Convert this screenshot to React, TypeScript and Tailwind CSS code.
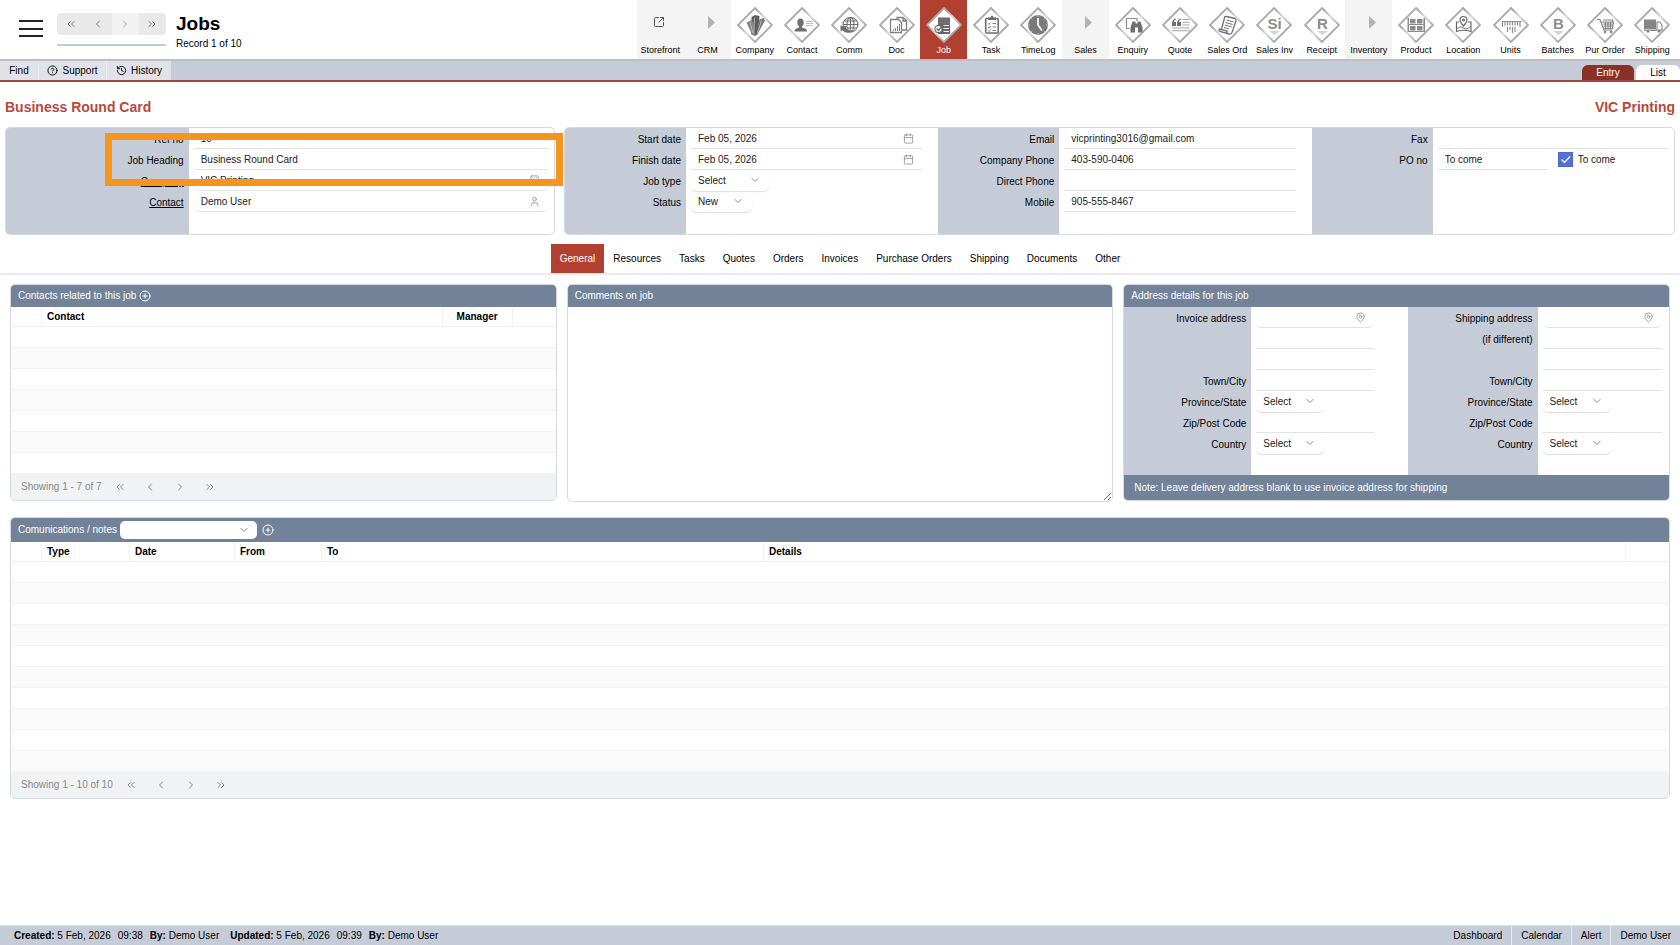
import { useState } from "react";
import type { ReactNode } from "react";
import { LuCalendar, LuChevronDown, LuChevronLeft, LuChevronRight, LuChevronsLeft, LuChevronsRight, LuCircleHelp, LuCirclePlus, LuHistory, LuMapPin, LuSquareArrowOutUpRight, LuUser, LuBuilding } from "react-icons/lu";

const G = "#6f6f6f";

// glyphs sit inside a 36x36 diamond
const glyphs: Record<string, ReactNode> = {
    Company: (
        <g fill="#5f5f5f">
            <path d="M14.500 10l3.500-2 4.500 1-1.500 18-3.500 2-3.500-2z" />
            <path d="M9.500 15.500l4-2 3 1.500.5 12.500-2.500-1z" fill="#858585" />
            <path d="M22.500 12.500l4-1.500 1.500 2.500-7 13-1.500 1z" fill="#777" />
            <path d="M17.500 10.500L16.800 28M13 15l2.800 11M24.500 13.500L20.500 26" stroke="#d0d0d0" strokeWidth=".7" fill="none" />
        </g>
    ),
    Contact: (
        <g fill={G}>
            <ellipse cx="16.500" cy="15.500" rx="3.200" ry="3.900" />
            <path d="M15 18h3v2.500l4 1.500q1 .5 1 2.500H10.500q0-2 1-2.500l3.500-1.500z" />
            <path d="M22 14.500h7M22 16.500h7M22 18.500h7" stroke="#b0b0b0" strokeWidth=".8" />
        </g>
    ),
    Comm: (
        <g fill="none" stroke={G} strokeWidth="1.100">
            <ellipse cx="19.500" cy="17.500" rx="7.500" ry="7" />
            <ellipse cx="19.500" cy="17.500" rx="3.500" ry="7" />
            <path d="M12 17.500h15M13.500 14h12M13.500 21h12M19.500 10.500v14" />
            <path d="M9 18.500l8 .5-2 2q4 3.500 12 1-5 5-11 4-3-.5-4.500-2.500l-2 1.500z" fill={G} stroke="#fff" strokeWidth=".5" />
        </g>
    ),
    Doc: (
        <g fill="none" stroke="#808080" strokeWidth="1.300">
            <path d="M11.500 12.500h8l3 3v10h-11z" />
            <path d="M18 12v-1.500h6l3.500 3V23H23M24 10.500v3.500h3.500" />
            <path d="M14.500 24v-1.500M16.500 24v-3M18.500 24v-5M20.500 24v-7" strokeWidth="1" />
        </g>
    ),
    Job: (
        <g>
            <path d="M12 10.500h12v16.500H12z" fill="#686868" />
            <path d="M12 13h12M12 15.500h12" stroke="#858585" strokeWidth=".6" />
            <path d="M17.500 18.500h5.500M17.500 21.500h5.500M17.500 24.500h5.500" stroke="#f0f0f0" strokeWidth="1.200" />
            <circle cx="12.500" cy="22" r="3.600" fill="#fff" stroke="#686868" strokeWidth="1.100" />
            <path d="M10.500 21.500l2 2 4-5" fill="none" stroke="#686868" strokeWidth="1.300" />
        </g>
    ),
    Task: (
        <g fill="none" stroke={G}>
            <rect x="12.700" y="11.500" width="12.500" height="14.500" rx="1" strokeWidth="1.600" />
            <path d="M15 13v-2.500h2.500Q18 8.500 19 8.500t1.500 2H23V13z" fill={G} stroke="none" />
            <path d="M15 16.500l1 1 1.500-2M15 20l1 1 1.500-2M15 23.500l1 1 1.500-2M19.500 16.500h3.500M19.500 20h3.500M19.500 23.500h3.500" strokeWidth=".9" />
        </g>
    ),
    TimeLog: (
        <g>
            <circle cx="18" cy="18" r="10" fill="#7a7a7a" />
            <path d="M18 11v7l4 5.500" fill="none" stroke="#fff" strokeWidth="1.700" />
            <path d="M18 8.500v1.500M18 26v1.500M8.500 18H10M26 18h1.500M11.300 11.300l1 1M24.700 11.300l-1 1M11.300 24.700l1-1M24.700 24.700l-1-1" stroke="#ddd" strokeWidth=".8" />
        </g>
    ),
    Enquiry: (
        <g fill={G}>
            <path d="M14.500 21.500h-3V11.500h10.500v2.500" fill="none" stroke="#909090" strokeWidth="1.200" />
            <path d="M17.500 14.500h3v2h2v-2h3l2 6v5h-4.500v-5h-3v5h-4.500v-5z" />
        </g>
    ),
    Quote: (
        <g>
            <path d="M14 11.500q-4 1-4 5v2.500h4v-4h-2q0-2 2-2.500zM19 11.500q-4 1-4 5v2.500h4v-4h-2q0-2 2-2.500z" fill={G} />
            <path d="M20.500 12.500h7M20.500 15.200h7M20.500 18h7M10 21h17.500M10 23.700h17.500" stroke="#a5a5a5" strokeWidth="1.100" />
        </g>
    ),
    "Sales Ord": (
        <g fill="none" stroke={G} strokeWidth="1.300">
            <path d="M15.500 11q0-2 2-1.500l8.500 2q1.500.5 1 2.500l-4 11.500q-1 2-3 1.500l-9-2.500q-1.500-.5-.5-2.500l7.500 2q-.5 2.500 1.500 3" />
            <path d="M15.500 11l-3 11" />
            <path d="M17.500 13l7 2M16.500 15.500l7 2M15.800 18l7 2M15 20.500l5 1.500" strokeWidth="1" />
        </g>
    ),
    "Sales Inv": <Letter text="Si" />,
    Receipt: <Letter text="R" />,
    Batches: <Letter text="B" />,
    Product: (
        <g fill="#8a8a8a">
            <path d="M9.500 11h1.500v14H9.500zM25.500 11H27v14h-1.500zM11 17h15v1H11zM11 24h15v1H11z" />
            <path d="M12 12h5.500v4.500H12zM19 12h5.500v4.500H19zM12 19h5.500v4.500H12zM19 19h5.500v4.500H19z" />
        </g>
    ),
    Location: (
        <g fill="none" stroke="#686868" strokeWidth="1.200">
            <path d="M14 15h-2.500v9.500q6.500-2.500 14.500 0V15h-3" />
            <path d="M12 21.500q3.500-3 6.500-.5t7-1.500" strokeWidth=".9" />
            <path d="M18.500 19q-3.500-4-3.500-6a3.500 3.500 0 0 1 7 0q0 2-3.500 6z" />
            <circle cx="18.500" cy="13" r="1" />
        </g>
    ),
    Units: (
        <path d="M9 14.500h19.500M9.500 15v5M12 15v3.500M14.500 15v3.500M17 15v3.500M19.500 15v3.500M22 15v3.500M24.500 15v3.500M27 15v5M14.500 20v5M17 20v3M19.500 20v6M22 20v5" fill="none" stroke="#919191" strokeWidth="1.200" />
    ),
    "Pur Order": (
        <g fill="none" stroke="#868686" strokeWidth="1.200">
            <path d="M10 12.500h3l4 10.500h8.500M14.500 15h12l-1 6.500h-8.500M16 17h10M16.500 19h9.500M18.500 15v6M21 15v6M23.500 15v6" />
            <path d="M16 13h9.500v2" />
            <circle cx="18" cy="25" r=".8" />
            <circle cx="24" cy="25" r=".8" />
        </g>
    ),
    Shipping: (
        <g fill="#858585">
            <path d="M10 12.500h12v9.500H10z" />
            <path d="M23 15h3l2 3.500V23h-5z" fill="#fff" stroke="#858585" strokeWidth="1.100" />
            <path d="M10 22.500h18v1.500H10z" />
            <circle cx="14" cy="24" r="2" stroke="#fff" strokeWidth=".6" />
            <circle cx="25" cy="24" r="2" stroke="#fff" strokeWidth=".6" />
        </g>
    ),
};

const modules = [
    "Storefront", "CRM", "Company", "Contact", "Comm", "Doc", "Job", "Task", "TimeLog", "Sales", "Enquiry",
    "Quote", "Sales Ord", "Sales Inv", "Receipt", "Inventory", "Product", "Location", "Units", "Batches", "Pur Order", "Shipping",
];

const tabs = ["General", "Resources", "Tasks", "Quotes", "Orders", "Invoices", "Purchase Orders", "Shipping", "Documents", "Other"];

type FieldDef = {
    id: string;
    label: string;
    value?: string;
    kind?: "text" | "lookup" | "select" | "po";
    icon?: ReactNode;
    link?: boolean;
    width?: string;
};

const jobFields: FieldDef[] = [
    { id: "ref", label: "Ref no", value: "10" },
    { id: "heading", label: "Job Heading", value: "Business Round Card" },
    { id: "company", label: "Company", value: "VIC Printing", kind: "lookup", link: true, icon: <LuBuilding /> },
    { id: "contact", label: "Contact", value: "Demo User", kind: "lookup", link: true, icon: <LuUser /> },
];

const dateFields: FieldDef[] = [
    { id: "start", label: "Start date", value: "Feb 05, 2026", icon: <LuCalendar /> },
    { id: "finish", label: "Finish date", value: "Feb 05, 2026", icon: <LuCalendar /> },
    { id: "type", label: "Job type", value: "Select", kind: "select", width: "w-[78px]" },
    { id: "status", label: "Status", value: "New", kind: "select", width: "w-[61px]" },
];

const contactFields: FieldDef[] = [
    { id: "email", label: "Email", value: "vicprinting3016@gmail.com" },
    { id: "phone", label: "Company Phone", value: "403-590-0406" },
    { id: "direct", label: "Direct Phone" },
    { id: "mobile", label: "Mobile", value: "905-555-8467" },
];

const poFields: FieldDef[] = [
    { id: "fax", label: "Fax" },
    { id: "po", label: "PO no", value: "To come", kind: "po" },
];

function addressFields(prefix: string, title: string, second: string): FieldDef[] {
    return [
        { id: prefix + "1", label: title, kind: "lookup", icon: <LuMapPin /> },
        { id: prefix + "2", label: second },
        { id: prefix + "3", label: "" },
        { id: prefix + "-town", label: "Town/City" },
        { id: prefix + "-state", label: "Province/State", value: "Select", kind: "select", width: "w-[68px]" },
        { id: prefix + "-zip", label: "Zip/Post Code" },
        { id: prefix + "-country", label: "Country", value: "Select", kind: "select", width: "w-[68px]" },
    ];
}

function Letter({ text }: { text: string }) {
    return (
        <g>
            <text x="18.500" y="22" textAnchor="middle" fontSize="15" fontWeight="bold" fill="#8c8c8c">{text}</text>
            <path d="M13 24h11l-5.500 4z" fill="#d4d4d4" />
        </g>
    );
}

function Diamond({ name }: { name: string }) {
    return (
        <svg viewBox="0 0 36 36" className="size-9" aria-hidden="true">
            <defs>
                <linearGradient id="edge" x1="0" y1="0" x2="1" y2="1">
                    <stop offset="0" stopColor="#d2d2d2" />
                    <stop offset=".3" stopColor="#a2a2a2" />
                    <stop offset=".5" stopColor="#d8d8d8" />
                    <stop offset=".75" stopColor="#a8a8a8" />
                    <stop offset="1" stopColor="#cfcfcf" />
                </linearGradient>
            </defs>
            <path d="M18 1L35 18 18 35 1 18z" fill="#fff" stroke="url(#edge)" strokeWidth="1.800" />
            {glyphs[name]}
        </svg>
    );
}

function ModuleButton({ name }: { name: string }) {
    const group = ["Storefront", "CRM", "Sales", "Inventory"].includes(name);
    const active = name === "Job";
    return (
        <button className={`flex-1 min-w-0 flex flex-col items-center pt-[7px] text-[9px] leading-[12px] whitespace-nowrap ${group ? "bg-[#f4f4f4]" : ""} ${active ? "bg-[#b24030] text-white" : ""}`}>
            <span className="h-9 mb-px flex justify-center">
                {!group && <Diamond name={name} />}
                {name === "Storefront" && <LuSquareArrowOutUpRight className="size-3 mt-[9px] mr-[3px] text-[#555]" />}
                {group && name !== "Storefront" && (
                    <svg viewBox="0 0 7 13" className="w-[7px] h-[13px] mt-[9px] ml-[7px]"><path d="M0 0L7 6.500 0 13z" fill="#b3b3b3" /></svg>
                )}
            </span>
            {name}
        </button>
    );
}

function SelectBox({ id, value, width }: { id: string; value: string; width: string }) {
    return (
        <span className={`relative h-[21px] block ${width}`}>
            <select id={id} defaultValue={value} className="appearance-none w-full h-full pl-[7px] pr-4 rounded-[5px] shadow-[0_1px_1px_#dedede]">
                <option>{value}</option>
            </select>
            <LuChevronDown className="absolute right-2 top-1 size-3 text-[#888] pointer-events-none" />
        </span>
    );
}

function FieldValue({ f }: { f: FieldDef }) {
    if (f.kind === "select") return <SelectBox id={f.id} value={f.value ?? ""} width={f.width ?? ""} />;
    if (f.kind === "po") {
        return (
            <div className="flex items-center h-full">
                <input id={f.id} defaultValue={f.value} className="w-[110px] h-full pl-[7px] border-b border-[#e3e3e3]" />
                <label className="ml-[10px] flex items-center gap-[5px]">
                    <span className="grid size-[15px]">
                        <input type="checkbox" defaultChecked className="appearance-none col-start-1 row-start-1 size-[15px] border border-[#4a68c8] checked:bg-[#5470d2]" />
                        <svg viewBox="0 0 15 15" className="col-start-1 row-start-1 pointer-events-none"><path d="M3.500 7.500l3 3 5.500-6" fill="none" stroke="#fff" strokeWidth="1.200" /></svg>
                    </span>
                    To come
                </label>
            </div>
        );
    }
    return (
        <div className={`flex items-center h-full pr-2 border-b border-[#e3e3e3] ${f.kind === "lookup" ? "rounded-b-[5px]" : ""}`}>
            <input id={f.id} aria-label={f.label || "Address line"} defaultValue={f.value} className="flex-1 min-w-0 h-full pl-[7px] bg-transparent" />
            <span className="text-[11px] text-[#999]">{f.icon}</span>
        </div>
    );
}

function FieldGroup({ fields, labelWidth, pad }: { fields: FieldDef[]; labelWidth: string; pad: string }) {
    return (
        <div className="flex min-w-0">
            <div className={`bg-[#c6ccd7] shrink-0 pr-[5px] text-right ${labelWidth}`}>
                {fields.map((f) => (
                    <div key={f.id} className="h-[21px] leading-[23px]">
                        {f.link ? <a href="#" className="underline">{f.label}</a> : <label htmlFor={f.id}>{f.label}</label>}
                    </div>
                ))}
            </div>
            <div className={`flex-1 min-w-0 pl-[5px] text-[#222] ${pad}`}>
                {fields.map((f) => (
                    <div key={f.id} className="h-[21px]"><FieldValue f={f} /></div>
                ))}
            </div>
        </div>
    );
}

function Panel({ title, children }: { title: string; children: ReactNode }) {
    return (
        <section className="border border-[#d5dae2] rounded-[5px] overflow-hidden bg-white">
            <h2 className="h-[22px] pl-[7px] flex items-center bg-[#718299] text-white">{title}</h2>
            {children}
        </section>
    );
}

function Pager({ text }: { text: string }) {
    return (
        <div className="h-[27px] pl-[10px] flex items-center bg-[#f0f2f4] text-[#888]">
            <span className="mr-3">{text}</span>
            <span className="flex gap-[18px]">
                <button aria-label="First"><LuChevronsLeft className="size-3" /></button>
                <button aria-label="Previous"><LuChevronLeft className="size-3" /></button>
                <button aria-label="Next"><LuChevronRight className="size-3" /></button>
                <button aria-label="Last"><LuChevronsRight className="size-3" /></button>
            </span>
        </div>
    );
}

function DataTable({ columns, rows }: { columns: { name: string; width: string; center?: boolean }[]; rows: number }) {
    return (
        <table className="w-full table-fixed border-separate border-spacing-0">
            <thead>
                <tr>
                    {columns.map((c, i) => (
                        <th key={i} className={`h-5 p-0 font-bold border-b border-r border-[#f1f1f1] last:border-r-0 ${c.center ? "text-center" : "pl-[5px] text-left"} ${c.width}`}>{c.name}</th>
                    ))}
                </tr>
            </thead>
            <tbody>
                {Array.from({ length: rows }, (_, i) => (
                    <tr key={i} className="group even:bg-[#fafafa]">
                        <td colSpan={columns.length} className="h-[21px] group-last:h-5 p-0 border-b border-[#f3f3f3] group-last:border-b-0" />
                    </tr>
                ))}
            </tbody>
        </table>
    );
}

export default function App() {
    const [tab, setTab] = useState("General");

    return (
        <div className="min-h-screen flex flex-col bg-white font-['Liberation_Sans',Arial,sans-serif] text-[10px] leading-[14px] text-black">
            <header className="h-[61px] flex border-b-2 border-[#bdbfc3]">
                <button aria-label="Menu" className="ml-[19px] mt-5 w-6 h-[17px] flex flex-col justify-between">
                    <span className="h-[2px] w-full bg-[#222]" />
                    <span className="h-[2px] w-full bg-[#222]" />
                    <span className="h-[2px] w-full bg-[#222]" />
                </button>
                <div className="ml-[14px] mt-[13px] w-[109px]">
                    <div className="h-[22px] grid grid-cols-4 rounded-[4px] overflow-hidden bg-[#e9e9e9] text-[#777]">
                        <button aria-label="First record" className="grid place-items-center"><LuChevronsLeft className="size-3" /></button>
                        <button aria-label="Previous record" className="grid place-items-center"><LuChevronLeft className="size-3" /></button>
                        <button aria-label="Next record" className="grid place-items-center bg-[#f2f2f2] text-[#aaa]"><LuChevronRight className="size-3" /></button>
                        <button aria-label="Last record" className="grid place-items-center"><LuChevronsRight className="size-3" /></button>
                    </div>
                    <div className="mt-[9px] h-[2px] bg-[#c6ccd7]" />
                </div>
                <div className="ml-[10px] mt-[13px]">
                    <h1 className="text-[19px] leading-[22px] font-bold text-black">Jobs</h1>
                    <p className="mt-[2px]">Record 1 of 10</p>
                </div>
                <nav className="ml-auto w-[62.1%] pr-1 flex">
                    {modules.map((m) => <ModuleButton key={m} name={m} />)}
                </nav>
            </header>

            <div className="h-[21px] flex border-b-2 border-[#a34539] bg-[#c6ccd7]">
                <div className="flex gap-px bg-[#eceef2]">
                    <button className="w-[38px] bg-[#dfe2e8]">Find</button>
                    <button className="w-[67px] bg-[#dfe2e8] flex items-center justify-center gap-1"><LuCircleHelp className="size-[11px]" />Support</button>
                    <button className="w-[64px] bg-[#dfe2e8] flex items-center justify-center gap-1"><LuHistory className="size-[11px]" />History</button>
                </div>
                <div className="ml-auto mt-1 flex gap-[2px]">
                    <button className="w-[52px] rounded-t-[6px] bg-[#8b3024] text-white">Entry</button>
                    <button className="w-[44px] rounded-t-[6px] bg-white">List</button>
                </div>
            </div>

            <div className="h-[45px] px-[5px] pt-1 flex items-center justify-between text-[14px] font-bold text-[#b8483a]">
                <h2>Business Round Card</h2>
                <h2>VIC Printing</h2>
            </div>

            <div className="px-[5px] grid grid-cols-[50fr_101fr] gap-[9px]">
                <div className="relative h-[108px]">
                    <div className="h-full grid border border-[#d5dae2] rounded-[5px] overflow-hidden">
                        <FieldGroup fields={jobFields} labelWidth="w-1/3" pad="pr-[6px]" />
                    </div>
                    {/* highlight around the job heading */}
                    <div className="absolute left-[100px] -right-[8px] top-[6px] h-[53px] border-[7px] border-[#f7941e] z-10 pointer-events-none" />
                </div>
                <div className="h-[108px] grid grid-cols-[34fr_34fr_33fr] border border-[#d5dae2] rounded-[5px] overflow-hidden">
                    <FieldGroup fields={dateFields} labelWidth="w-[121px]" pad="pr-4" />
                    <FieldGroup fields={contactFields} labelWidth="w-[121px]" pad="pr-4" />
                    <FieldGroup fields={poFields} labelWidth="w-[121px]" pad="pr-[6px]" />
                </div>
            </div>

            <div className="mt-[9px] flex justify-center border-b-2 border-[#ebebeb]">
                {tabs.map((t) => (
                    <button key={t} onClick={() => setTab(t)} className={`h-[29px] px-[9px] ${t === tab ? "bg-[#b24030] text-white" : ""}`}>{t}</button>
                ))}
            </div>

            <main className="px-[10px] pt-[9px] pb-6">
                <div className="grid grid-cols-3 gap-[10px] items-start">
                    <section className="border border-[#d5dae2] rounded-[5px] overflow-hidden">
                        <div className="h-[22px] pl-[7px] flex items-center gap-[3px] bg-[#718299] text-white">
                            <h2>Contacts related to this job</h2>
                            <button aria-label="Add contact"><LuCirclePlus className="size-3" /></button>
                        </div>
                        <DataTable
                            rows={7}
                            columns={[
                                { name: "", width: "w-[31px]" },
                                { name: "Contact", width: "" },
                                { name: "Manager", width: "w-[70px]", center: true },
                                { name: "", width: "w-[43px]" },
                            ]}
                        />
                        <Pager text="Showing 1 - 7 of 7" />
                    </section>

                    <Panel title="Comments on job">
                        <textarea aria-label="Comments on job" className="block w-full h-[194px] p-2 resize" />
                    </Panel>

                    <Panel title="Address details for this job">
                        <div className="h-[168px] grid grid-cols-[52fr_48fr]">
                            <FieldGroup fields={addressFields("inv", "Invoice address", "")} labelWidth="w-[127px]" pad="pr-[34px]" />
                            <FieldGroup fields={addressFields("ship", "Shipping address", "(if different)")} labelWidth="w-[130px]" pad="pr-[7px]" />
                        </div>
                        <p className="h-[25px] pl-[10px] flex items-center bg-[#718299] text-white">Note: Leave delivery address blank to use invoice address for shipping</p>
                    </Panel>
                </div>

                <section className="mt-[15px] border border-[#d5dae2] rounded-[5px] overflow-hidden">
                    <div className="h-6 pl-[7px] flex items-center bg-[#718299] text-white">
                        <label htmlFor="comm-type">Comunications / notes</label>
                        <span className="relative ml-[3px] mr-[5px] w-[137px] h-[18px]">
                            <select id="comm-type" className="appearance-none w-full h-full rounded-[5px] bg-white text-[#333]"><option></option></select>
                            <LuChevronDown className="absolute right-[7px] top-[3px] size-3 text-[#888] pointer-events-none" />
                        </span>
                        <button aria-label="Add note"><LuCirclePlus className="size-3" /></button>
                    </div>
                    <DataTable
                        rows={10}
                        columns={[
                            { name: "", width: "w-[31px]" },
                            { name: "Type", width: "w-[88px]" },
                            { name: "Date", width: "w-[105px]" },
                            { name: "From", width: "w-[87px]" },
                            { name: "To", width: "w-[442px]" },
                            { name: "Details", width: "" },
                            { name: "", width: "w-[43px]" },
                        ]}
                    />
                    <Pager text="Showing 1 - 10 of 10" />
                </section>
            </main>

            <footer className="mt-auto h-5 flex items-center border-t border-[#dde1e8] bg-[#c6ccd7]">
                <div className="pl-[14px] flex gap-[7px]">
                    <span><b>Created:</b> 5 Feb, 2026</span>
                    <span>09:38</span>
                    <span className="mr-1"><b>By:</b> Demo User</span>
                    <span><b>Updated:</b> 5 Feb, 2026</span>
                    <span>09:39</span>
                    <span><b>By:</b> Demo User</span>
                </div>
                <nav className="ml-auto h-full flex items-center divide-x divide-[#e6e9ee]">
                    {["Dashboard", "Calendar", "Alert", "Demo User"].map((n) => (
                        <a key={n} href="#" className="h-full px-[9px] leading-[19px]">{n}</a>
                    ))}
                </nav>
            </footer>
        </div>
    );
}
